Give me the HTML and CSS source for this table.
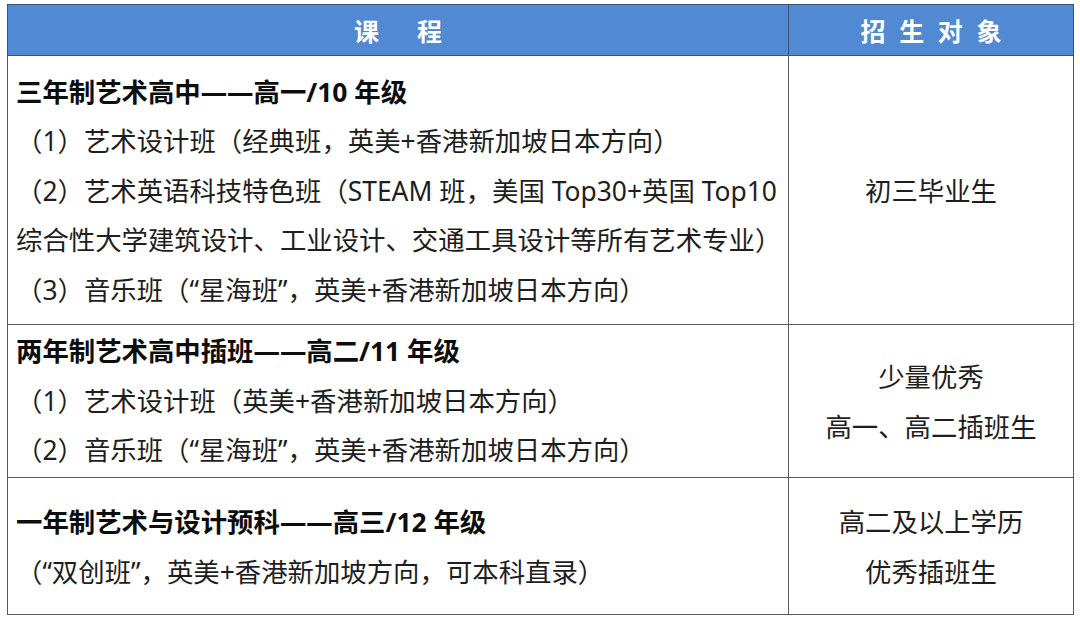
FILE: index.html
```html
<!DOCTYPE html>
<html lang="zh-CN">
<head>
<meta charset="utf-8">
<link rel="stylesheet" href="styles.css">
</head>
<body>
<table class="grid">
  <colgroup>
    <col class="col-course">
    <col class="col-target">
  </colgroup>
  <thead>
    <tr>
      <th class="h-course">课程</th>
      <th class="h-target">招 生 对 象</th>
    </tr>
  </thead>
  <tbody>
    <tr class="row-a">
      <td class="course">
        <div class="title">三年制艺术高中——高一/10 年级</div>
        <div class="line">（1）艺术设计班（经典班，英美+香港新加坡日本方向）</div>
        <div class="line">（2）艺术英语科技特色班（STEAM 班，美国 Top30+英国 Top10</div>
        <div class="line">综合性大学建筑设计、工业设计、交通工具设计等所有艺术专业）</div>
        <div class="line">（3）音乐班（“星海班”，英美+香港新加坡日本方向）</div>
      </td>
      <td class="target"><div class="line">初三毕业生</div></td>
    </tr>
    <tr class="row-b">
      <td class="course">
        <div class="title">两年制艺术高中插班——高二/11 年级</div>
        <div class="line">（1）艺术设计班（英美+香港新加坡日本方向）</div>
        <div class="line">（2）音乐班（“星海班”，英美+香港新加坡日本方向）</div>
      </td>
      <td class="target">
        <div class="line">少量优秀</div>
        <div class="line">高一、高二插班生</div>
      </td>
    </tr>
    <tr class="row-c">
      <td class="course">
        <div class="title">一年制艺术与设计预科——高三/12 年级</div>
        <div class="line">（“双创班”，英美+香港新加坡方向，可本科直录）</div>
      </td>
      <td class="target">
        <div class="line">高二及以上学历</div>
        <div class="line">优秀插班生</div>
      </td>
    </tr>
  </tbody>
</table>
</body>
</html>
```

FILE: styles.css
```css
html, body {
  margin: 0;
  padding: 0;
  background: #ffffff;
}

body {
  font-family: "Noto Sans", "Noto Sans CJK SC", sans-serif;
  color: #1e1e1e;
}

.grid {
  margin: 4px 0 0 7px;
  width: 1066px;
  border-collapse: collapse;
  table-layout: fixed;
}

.col-course { width: 781px; }
.col-target { width: 285px; }

.grid th,
.grid td {
  border: 1px solid #5a5a5a;
  padding: 0;
}

.grid th {
  height: 50px;
  background: #5189d3;
  border-color: #35557f;
  color: #ffffff;
  font-family: "Noto Sans CJK SC", sans-serif;
  font-weight: 700;
  font-size: 25px;
  line-height: 50px;
  text-align: center;
  white-space: nowrap;
}

.h-course {
  letter-spacing: 38px;
  text-indent: 38px;
}

.h-target {
  letter-spacing: 4px;
  text-indent: 4px;
}

.grid td {
  font-size: 26.4px;
  line-height: 49.6px;
  vertical-align: middle;
  white-space: nowrap;
}

.course {
  padding: 3px 0 0 8px !important;
  text-align: left;
}

.target {
  text-align: center;
  padding-top: 3px !important;
}

.title {
  font-weight: 700;
  color: #0d0d0d;
}

.row-a td { height: 265px; }
.row-b td { height: 149px; }
.row-b .course { padding-top: 1px !important; }
.row-c td { height: 133px; }
```
